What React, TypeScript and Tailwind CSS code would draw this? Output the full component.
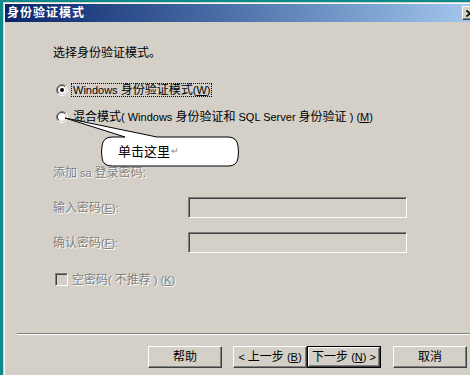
import type { ReactNode } from "react";

const FONT = "font-['Liberation_Sans','Noto_Sans_CJK_SC',sans-serif]";
const DISABLED = "text-[#808080] [text-shadow:1px_1px_0_#fff]";

function L({ children }: { children: ReactNode }) {
  return <span className="text-[11px]">{children}</span>;
}

function Radio({ checked }: { checked?: boolean }) {
  return (
    <svg width="12" height="12" viewBox="0 0 12 12" className="shrink-0">
      <circle cx="6" cy="6" r="4" fill="#fff" />
      <path d="M2.1 9.9 A5.5 5.5 0 0 1 9.9 2.1" stroke="#808080" fill="none" />
      <path d="M9.9 2.1 A5.5 5.5 0 0 1 2.1 9.9" stroke="#fff" fill="none" />
      <path d="M2.8 9.2 A4.5 4.5 0 0 1 9.2 2.8" stroke="#404040" fill="none" />
      <path d="M9.2 2.8 A4.5 4.5 0 0 1 2.8 9.2" stroke="#d4d0c8" fill="none" />
      {checked && <circle cx="6" cy="6" r="2" fill="#000" />}
    </svg>
  );
}

function Sunken({ className }: { className: string }) {
  return (
    <div
      className={`${className} border border-t-[#808080] border-l-[#808080] border-b-white border-r-white bg-[#d4d0c8] shadow-[inset_1px_1px_0_#404040,inset_-1px_-1px_0_#d4d0c8]`}
    />
  );
}

function Btn({ children, def }: { children: ReactNode; def?: boolean }) {
  return (
    <div className={`h-[22px] w-[74px] ${def ? "border border-black" : ""}`}>
      <div className="flex h-full w-full items-center justify-center whitespace-pre border border-t-white border-l-white border-b-[#404040] border-r-[#404040] shadow-[inset_-1px_-1px_0_#808080] text-[12px] text-black">
        <span>{children}</span>
      </div>
    </div>
  );
}

export default function App() {
  return (
    <div className={`relative h-[375px] w-[470px] overflow-hidden bg-[#0e8a8a] pl-[3px] pt-[2px] ${FONT}`}>
      <div className="h-[380px] w-[477px] border-l border-t border-[#d4d0c8] bg-[#d4d0c8] pl-[1px] pt-[1px] shadow-[inset_1px_1px_0_#fff]">
        {/* title bar */}
        <div className="flex h-[18px] items-center justify-between bg-linear-to-r from-[#0a246a] to-[#a6caf0] pl-[2px] pr-[2px]">
          <span className="text-[12px] font-bold tracking-[1px] text-white">身份验证模式</span>
          <div className="flex h-[14px] w-[16px] items-center justify-center border border-t-white border-l-white border-b-[#404040] border-r-[#404040] bg-[#d4d0c8] shadow-[inset_-1px_-1px_0_#808080]">
            <svg width="8" height="7" viewBox="0 0 8 7">
              <path d="M0.5 0.5 L7.5 6.5 M7.5 0.5 L0.5 6.5" stroke="#000" strokeWidth="1.6" />
            </svg>
          </div>
        </div>

        {/* body */}
        <div className="flex flex-col text-[12px] text-black">
          <div className="ml-[48px] mt-[23px] flex h-[15px] items-center">选择身份验证模式。</div>

          <div className="ml-[51px] mt-[23px] flex h-[14px] items-center gap-[3px]">
            <Radio checked />
            <span className="flex h-[14px] items-center border border-dotted border-black px-[1px] whitespace-pre">
              <L>Windows </L>身份验证模式<L>(<u>W</u>)</L>
            </span>
          </div>

          <div className="ml-[51px] mt-[13px] flex h-[14px] items-center gap-[3px]">
            <Radio />
            <span className="flex h-[14px] items-center border border-transparent px-[1px] whitespace-pre">
              混合模式<L>( Windows </L>身份验证和<L> SQL Server </L>身份验证<L> ) (<u>M</u>)</L>
            </span>
          </div>

          <div className={`ml-[48px] mt-[42px] flex h-[14px] items-center whitespace-pre ${DISABLED}`}>
            添加<L> sa </L>登录密码:
          </div>

          <div className="ml-[48px] mt-[17px] flex h-[21px] items-center">
            <span className={`w-[135px] ${DISABLED}`}>
              输入密码<L>(<u>E</u>):</L>
            </span>
            <Sunken className="h-[21px] w-[219px]" />
          </div>

          <div className="ml-[48px] mt-[14px] flex h-[21px] items-center">
            <span className={`w-[135px] ${DISABLED}`}>
              确认密码<L>(<u>F</u>):</L>
            </span>
            <Sunken className="h-[21px] w-[219px]" />
          </div>

          <div className="ml-[50px] mt-[20px] flex h-[13px] items-center gap-[4px]">
            <Sunken className="h-[13px] w-[13px]" />
            <span className={`whitespace-pre ${DISABLED}`}>
              空密码<L>( </L>不推荐<L> ) (<u>K</u>)</L>
            </span>
          </div>

          <div className="ml-[12px] mt-[47px] h-[2px] border-t border-b border-t-[#808080] border-b-white" />

          <div className="ml-[143px] mt-[11px] flex items-center">
            <Btn>帮助</Btn>
            <div className="ml-[11px]">
              <Btn>
                <L>&lt; </L>上一步<L> (<u>B</u>)</L>
              </Btn>
            </div>
            <Btn def>
              下一步<L> (<u>N</u>) &gt;</L>
            </Btn>
            <div className="ml-[12px]">
              <Btn>取消</Btn>
            </div>
          </div>
        </div>
      </div>

      {/* callout overlay */}
      <svg className="pointer-events-none absolute left-0 top-0" width="470" height="375" viewBox="0 0 470 375">
        <path
          d="M112 137 L125 137 L65 118 L157 137 L228 137 Q237 137 238 146 Q239 152 238 158 Q237 166 228 166 L112 166 Q103 166 102 158 Q101 152 102 146 Q103 137 112 137 Z"
          fill="#fff"
          stroke="#000"
          strokeWidth="1"
        />
      </svg>
      <div className="absolute left-[118px] top-[143px] flex h-[17px] items-center">
        <span className="text-[13px] text-black">单击这里</span>
        <span className="ml-[1px] text-[9px] text-[#808080]">↵</span>
      </div>
    </div>
  );
}
